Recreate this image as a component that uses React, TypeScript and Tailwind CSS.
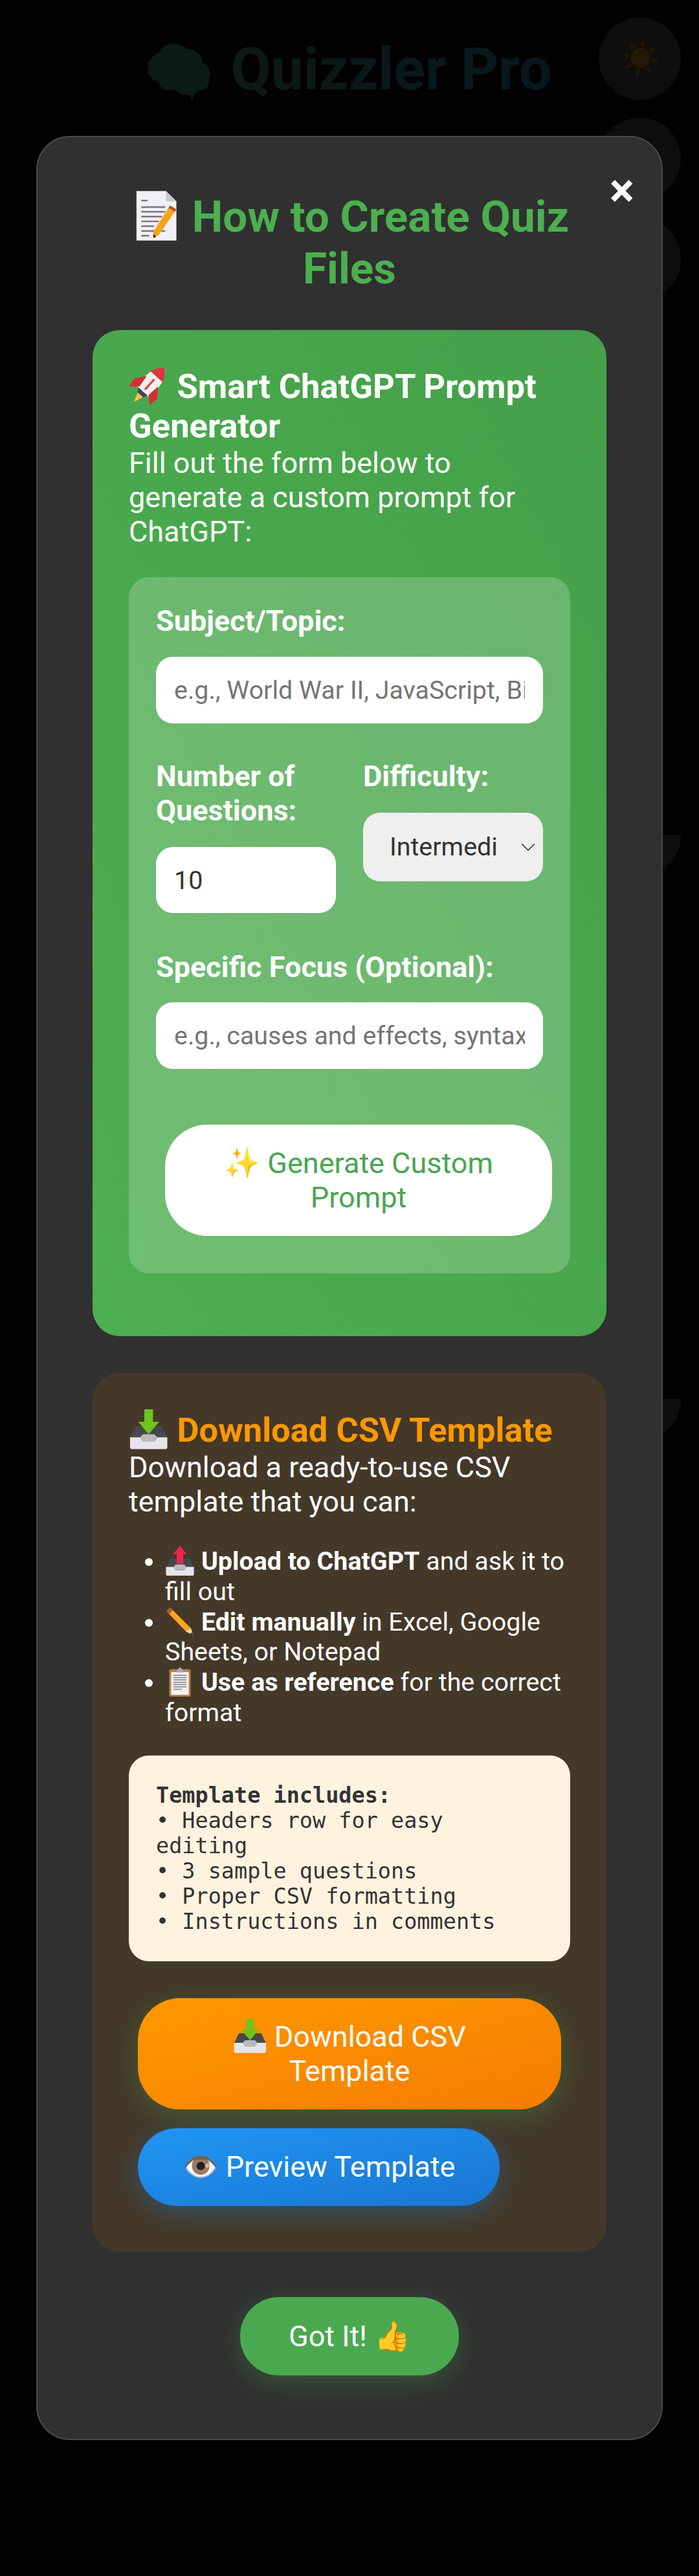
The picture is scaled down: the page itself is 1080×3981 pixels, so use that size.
import type { ReactNode } from 'react';

const sans = 'font-["Roboto",sans-serif]';
const labelCls = 'block text-[45px] font-bold leading-[53px] text-white';
const inputCls =
  'block h-[103px] w-full rounded-[26px] bg-white px-[28px] text-[39.4px] text-[#333] outline-none placeholder:text-[#757575]';

// the reference uses another emoji set, so the ones that look very different are drawn
// negative margin keeps the glyph from stretching the line box
function Emoji({ label, children }: { label: string; children: ReactNode }) {
  return (
    <svg role="img" aria-label={label} viewBox="0 0 64 64" className="my-[-0.3em] inline-block size-[1.17em] align-[0.08em]">
      {children}
    </svg>
  );
}

function Memo() {
  return (
    <Emoji label="memo">
      <path d="M8 1H45L58 14V63H8Z" fill="#f1f0f4" />
      <path d="M45 1V14H58Z" fill="#c9c7d0" />
      <path d="M14 13H22M14 21H44M14 27H44M14 33H40M14 39H36M14 45H30M14 51H44M14 57H24" stroke="#77767c" strokeWidth="2" />
      <path d="M50 19L58 24L36 56L29 60L29 52Z" fill="#f7a41d" />
      <path d="M50 19L58 24L56 27L48 22Z" fill="#b4552c" />
      <path d="M29 60L29 55L33 58Z" fill="#333" />
    </Emoji>
  );
}

function Rocket() {
  return (
    <Emoji label="rocket">
      <g transform="rotate(42 32 32) translate(32 32) scale(1.12) translate(-32 -34)">
        <path d="M32 0C44 10 47 26 43 46H21C17 26 20 10 32 0Z" fill="#f6eeea" />
        <path d="M32 0C38 5 42 11 43.500 17H20.500C22 11 26 5 32 0Z" fill="#e0323c" />
        <path d="M21 26L10 40L12 54L23 44ZM43 26L54 40L52 54L41 44Z" fill="#d92b36" />
        <path d="M30.500 22H33.500V42H30.500Z" fill="#d9424a" />
        <path d="M24 46H40L38 52H26Z" fill="#4d3a66" />
        <path d="M27 52H37L32 66Z" fill="#f8c537" />
      </g>
    </Emoji>
  );
}

function Tray({ up }: { up?: boolean }) {
  return (
    <Emoji label={up ? 'outbox tray' : 'inbox tray'}>
      <path d="M11 27H53L62 46H2Z" fill="#47474d" />
      <path d="M2 45H18L23 52H41L46 45H62V61Q62 64 59 64H5Q2 64 2 61Z" fill="#e6e4ea" />
      <path d="M18 45L23 40H41L46 45L41 52H23Z" fill="#b9b8be" />
      {up ? (
        <path d="M32 0L47 18H39V38H25V18H17Z" fill="#e9264f" />
      ) : (
        <path d="M25 0H39V20H49L32 40L15 20H25Z" fill="#6ec31c" />
      )}
    </Emoji>
  );
}

function Pencil() {
  return (
    <Emoji label="pencil">
      <path d="M3 11L11 3L55 47L61 63L45 55Z" fill="#f5a524" />
      <path d="M3 11L11 3L17 9L9 17Z" fill="#b4552c" />
      <path d="M55 47L61 63L45 55Z" fill="#f1d3a8" />
      <path d="M58 56L61 63L54 60Z" fill="#333" />
    </Emoji>
  );
}

function Clipboard() {
  return (
    <Emoji label="clipboard">
      <rect x="9" y="5" width="46" height="59" rx="4" fill="#b97a3e" />
      <rect x="13" y="11" width="38" height="49" fill="#f4f4f6" />
      <path d="M25 6H28Q29 1 32 1T36 6H39V12H25Z" fill="#a9a9b0" />
      <path d="M18 18H46M18 23H46M18 28H46M18 33H46M18 38H46M18 43H46M18 48H36" stroke="#8b8b92" strokeWidth="2.4" />
    </Emoji>
  );
}

export default function App() {
  return (
    <div className={`relative h-[3981px] w-[1080px] overflow-hidden bg-[#121212] ${sans}`}>
      {/* page behind the overlay */}
      <header className="flex items-center justify-center pt-[40px]">
        <h1 className="text-[90px] font-bold">
          <svg viewBox="0 0 100 88" className="mr-[29px] inline-block h-[88px] w-[100px] align-[-0.2em]">
            <path
              d="M30 2C42-2 56 0 62 8C76 8 84 16 86 28C96 34 100 44 96 54C98 66 90 72 80 72C74 76 72 78 72 80L70 88L66 78C52 80 46 74 44 70C32 74 20 70 18 58C6 56 0 46 2 34C2 22 14 14 20 14C22 8 26 4 30 2Z"
              fill="#5cc89a"
            />
          </svg>
          <span className="bg-gradient-to-r from-[#5cc89a] to-[#3ab0e8] bg-clip-text text-transparent">Quizzler Pro</span>
        </h1>
      </header>
      <div className="absolute right-[28px] top-[27px] flex flex-col gap-[28px]">
        <div className="flex size-[127px] items-center justify-center rounded-full bg-white/40 text-[50px]">☀️</div>
        <div className="size-[127px] rounded-full bg-white/40" />
        <div className="size-[127px] rounded-full bg-white/40" />
      </div>
      <div className="absolute right-[28px] top-[1290px] h-[64px] w-[127px] rounded-b-full bg-white/40" />
      <div className="absolute right-[28px] top-[2162px] h-[64px] w-[127px] rounded-b-full bg-white/40" />

      {/* overlay + modal */}
      <div className="absolute inset-0 bg-black/[.87]">
        <div className="relative ml-[56px] mt-[210px] w-[968px] rounded-[52px] border-2 border-[#4a4a4a] bg-[#303030] px-[85px] pb-[98px] pt-[83px]">
          <button className="absolute right-[42px] top-[47px] text-[72px] font-bold leading-[72px] text-white">×</button>
          <h2 className="mb-[55px] text-center text-[67.5px] font-bold leading-[80px] text-[#4caf50]">
            <Memo /> How to Create Quiz Files
          </h2>

          <section className="rounded-[42px] bg-gradient-to-tr from-[#4caf50] to-[#45a049] px-[56px] pb-[97px] pt-[57px] text-white">
            <h3 className="text-[52.5px] font-bold leading-[61px]">
              <Rocket /> Smart ChatGPT Prompt Generator
            </h3>
            <p className="mb-[44px] text-[45px] leading-[53px]">Fill out the form below to generate a custom prompt for ChatGPT:</p>

            <div className="rounded-[31px] bg-white/20 px-[42px] pb-[58px] pt-[41px]">
              <label className={`${labelCls} mb-[29px]`}>Subject/Topic:</label>
              <input placeholder="e.g., World War II, JavaScript, Biology" className={inputCls} />

              <div className="mb-[57px] mt-[55px] grid grid-cols-2 gap-[42px]">
                <div>
                  <label className={`${labelCls} mb-[30px]`}>Number of Questions:</label>
                  <input defaultValue="10" className={`${inputCls} !h-[102px]`} />
                </div>
                <div>
                  <label className={`${labelCls} mb-[30px]`}>Difficulty:</label>
                  <div className="relative">
                    <select className="block h-[106px] w-full appearance-none rounded-[26px] bg-[#efefef] pl-[41px] pr-[69px] text-[39.4px] text-[#333] outline-none">
                      <option>Intermediate</option>
                    </select>
                    <svg viewBox="0 0 22 12" fill="none" stroke="#333" strokeWidth="1.6" className="pointer-events-none absolute right-[12px] top-[47px] h-[12px] w-[22px]">
                      <path d="M1 1L11 11L21 1" />
                    </svg>
                  </div>
                </div>
              </div>

              <label className={`${labelCls} mb-[28px]`}>Specific Focus (Optional):</label>
              <input placeholder="e.g., causes and effects, syntax, formulas" className={inputCls} />

              <button className="ml-[14px] mt-[86px] block h-[172px] w-[598px] rounded-[65px] bg-white px-[84px] text-center text-[45px] leading-[53px] text-[#4aa552]">✨ Generate Custom Prompt</button>
            </div>
          </section>

          <section className="mt-[57px] rounded-[42px] bg-[#443829] px-[56px] pb-[71px] pt-[58px] text-white">
            <h3 className="text-[52.5px] font-bold leading-[61px] text-[#ff9800]">
              <Tray /> Download CSV Template
            </h3>
            <p className="mb-[43px] text-[45px] leading-[53px]">Download a ready-to-use CSV template that you can:</p>
            <ul className="mb-[42px] list-disc pl-[56px] text-[39.4px] leading-[46.8px]">
              <li>
                <Tray up /> <strong>Upload to ChatGPT</strong> and ask it to fill out
              </li>
              <li>
                <Pencil /> <strong>Edit manually</strong> in Excel, Google Sheets, or Notepad
              </li>
              <li>
                <Clipboard /> <strong>Use as reference</strong> for the correct format
              </li>
            </ul>
            <div className="rounded-[31px] bg-[#fff3e0] p-[42px] font-['DejaVu_Sans_Mono',monospace] text-[33.5px] leading-[39px] text-[#333]">
              <strong>Template includes:</strong><br />
              • Headers row for easy editing<br />
              • 3 sample questions<br />
              • Proper CSV formatting<br />
              • Instructions in comments
            </div>
            <button className="ml-[14px] mt-[57px] block h-[172px] w-[654px] rounded-[65px] bg-gradient-to-br from-[#ff9800] to-[#f57c00] px-[84px] text-center text-[45px] leading-[53px] shadow-[0_10px_40px_rgba(76,175,80,0.3)]">
              <Tray /> Download CSV Template
            </button>
            <button className="ml-[14px] mt-[29px] block h-[120px] w-[559px] rounded-[60px] bg-gradient-to-br from-[#2196f3] to-[#1976d2] text-center text-[45px] shadow-[0_10px_40px_rgba(33,150,243,0.3)]">👁️ Preview Template</button>
          </section>

          <div className="mt-[70px] flex justify-center">
            <button className="h-[121px] w-[338px] rounded-[60px] bg-[#4aa94f] text-[45px] text-white shadow-[0_10px_40px_rgba(76,175,80,0.3)]">Got It! 👍</button>
          </div>
        </div>
      </div>
    </div>
  );
}
